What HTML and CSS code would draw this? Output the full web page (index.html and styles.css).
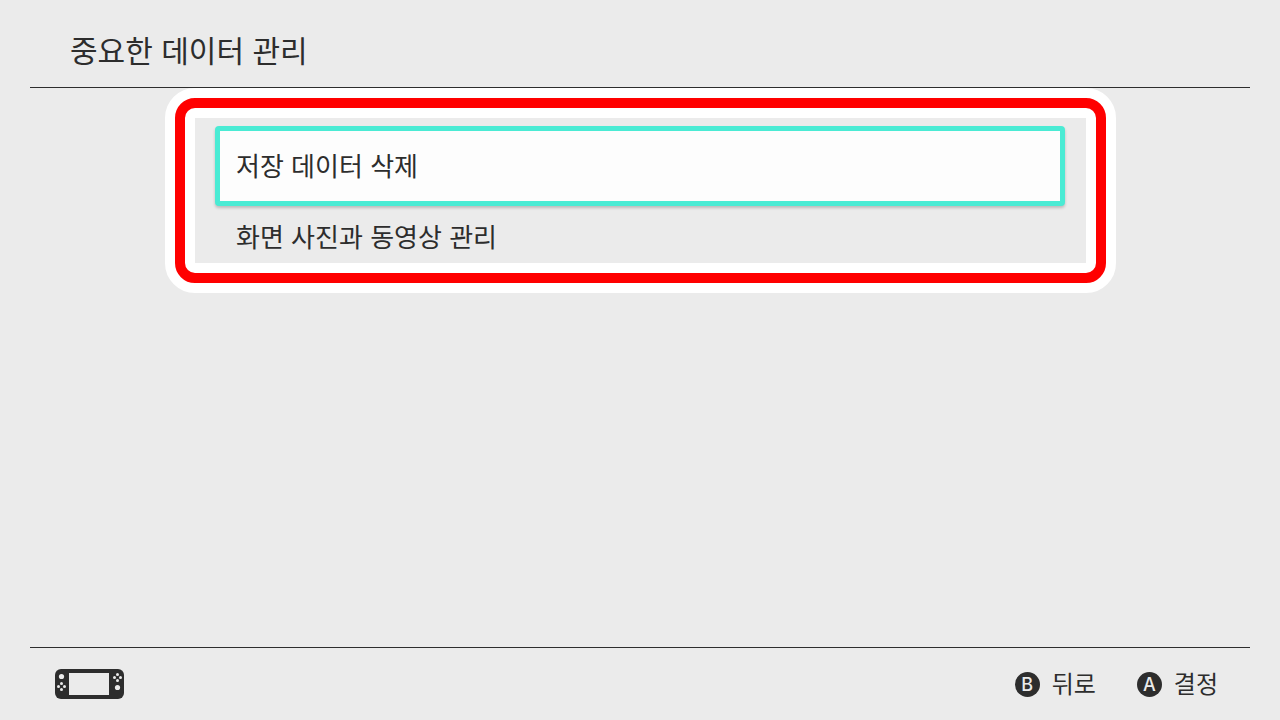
FILE: index.html
```html
<!DOCTYPE html>
<html lang="ko">
<head>
    <meta charset="UTF-8">
    <title>중요한 데이터 관리</title>
    <link rel="stylesheet" href="styles.css">
</head>
<body>
    <header class="header">
        <h1>중요한 데이터 관리</h1>
    </header>

    <main class="content">
        <div class="highlight">
            <div class="highlight-line">
                <div class="menu">
                    <button type="button" class="menu-item selected">저장 데이터 삭제</button>
                    <button type="button" class="menu-item">화면 사진과 동영상 관리</button>
                </div>
            </div>
        </div>
    </main>

    <footer class="footer">
        <svg class="console" width="70" height="30" viewBox="0 0 70 30" aria-hidden="true">
            <rect width="69" height="30" rx="6" fill="#2d2d2d"/>
            <rect x="14" y="4" width="40" height="22" fill="#ebebeb"/>
            <g fill="#ebebeb">
                <circle cx="6.5" cy="7.5" r="2.6"/>
                <circle cx="6.5" cy="14.5" r="1.5"/>
                <circle cx="3.5" cy="17.5" r="1.5"/>
                <circle cx="9.5" cy="17.5" r="1.5"/>
                <circle cx="6.5" cy="20.5" r="1.5"/>
                <circle cx="62.5" cy="5.5" r="1.5"/>
                <circle cx="59.5" cy="8.5" r="1.5"/>
                <circle cx="65.5" cy="8.5" r="1.5"/>
                <circle cx="62.5" cy="11.5" r="1.5"/>
                <circle cx="62.5" cy="18.5" r="2.6"/>
            </g>
        </svg>
        <div class="actions">
            <button type="button" class="action"><span class="key">B</span><span class="label">뒤로</span></button>
            <button type="button" class="action"><span class="key">A</span><span class="label">결정</span></button>
        </div>
    </footer>
</body>
</html>
```
FILE: styles.css
```css
* {
    box-sizing: border-box;
}
body {
    margin: 0;
    padding: 0 30px;
    min-height: 100vh;
    display: flex;
    flex-direction: column;
    background-color: #ebebeb;
    color: #2d2d2d;
    font-family: "Noto Sans CJK KR", sans-serif;
}
button {
    margin: 0;
    border: none;
    background: none;
    color: inherit;
    font-family: inherit;
    cursor: pointer;
}
.header {
    padding: 28px 40px 17px;
    border-bottom: 1px solid #2d2d2d;
}
h1 {
    margin: 0;
    font-size: 30px;
    line-height: 42px;
    font-weight: 400;
}
.content {
    flex: 1;
    padding: 0 134px 0 135px;
}
/* 빨간 강조 테두리 */
.highlight {
    border: 10px solid #fff;
    border-radius: 30px;
    background-color: #fff;
}
.highlight-line {
    padding: 10px;
    border: 10px solid #f00;
    border-radius: 20px;
}
.menu {
    display: flex;
    flex-direction: column;
    padding: 8px 21px 0 20px;
    background-color: #ebebeb;
}
.menu-item {
    padding: 12px 21px 9px;
    font-size: 26px;
    line-height: 36px;
    text-align: left;
}
.menu-item.selected {
    padding: 16px 16px 18px;
    border: 5px solid #4aebd4;
    border-radius: 4px;
    background-color: #fdfdfd;
    box-shadow: 0 2px 3px rgba(0, 0, 0, 0.2);
}
.footer {
    display: flex;
    align-items: center;
    justify-content: space-between;
    height: 73px;
    padding: 0 32px 0 25px;
    border-top: 1px solid #2d2d2d;
}
.actions {
    display: flex;
    gap: 41px;
}
.action {
    display: flex;
    align-items: center;
    gap: 12px;
    padding: 0;
    font-size: 24px;
    line-height: 32px;
}
.label {
    padding-bottom: 2px;
}
.key {
    width: 25px;
    height: 25px;
    border-radius: 50%;
    background-color: #2d2d2d;
    color: #ebebeb;
    font-family: Inter, sans-serif;
    font-size: 18px;
    font-weight: 500;
    line-height: 25px;
    text-align: center;
}
```
